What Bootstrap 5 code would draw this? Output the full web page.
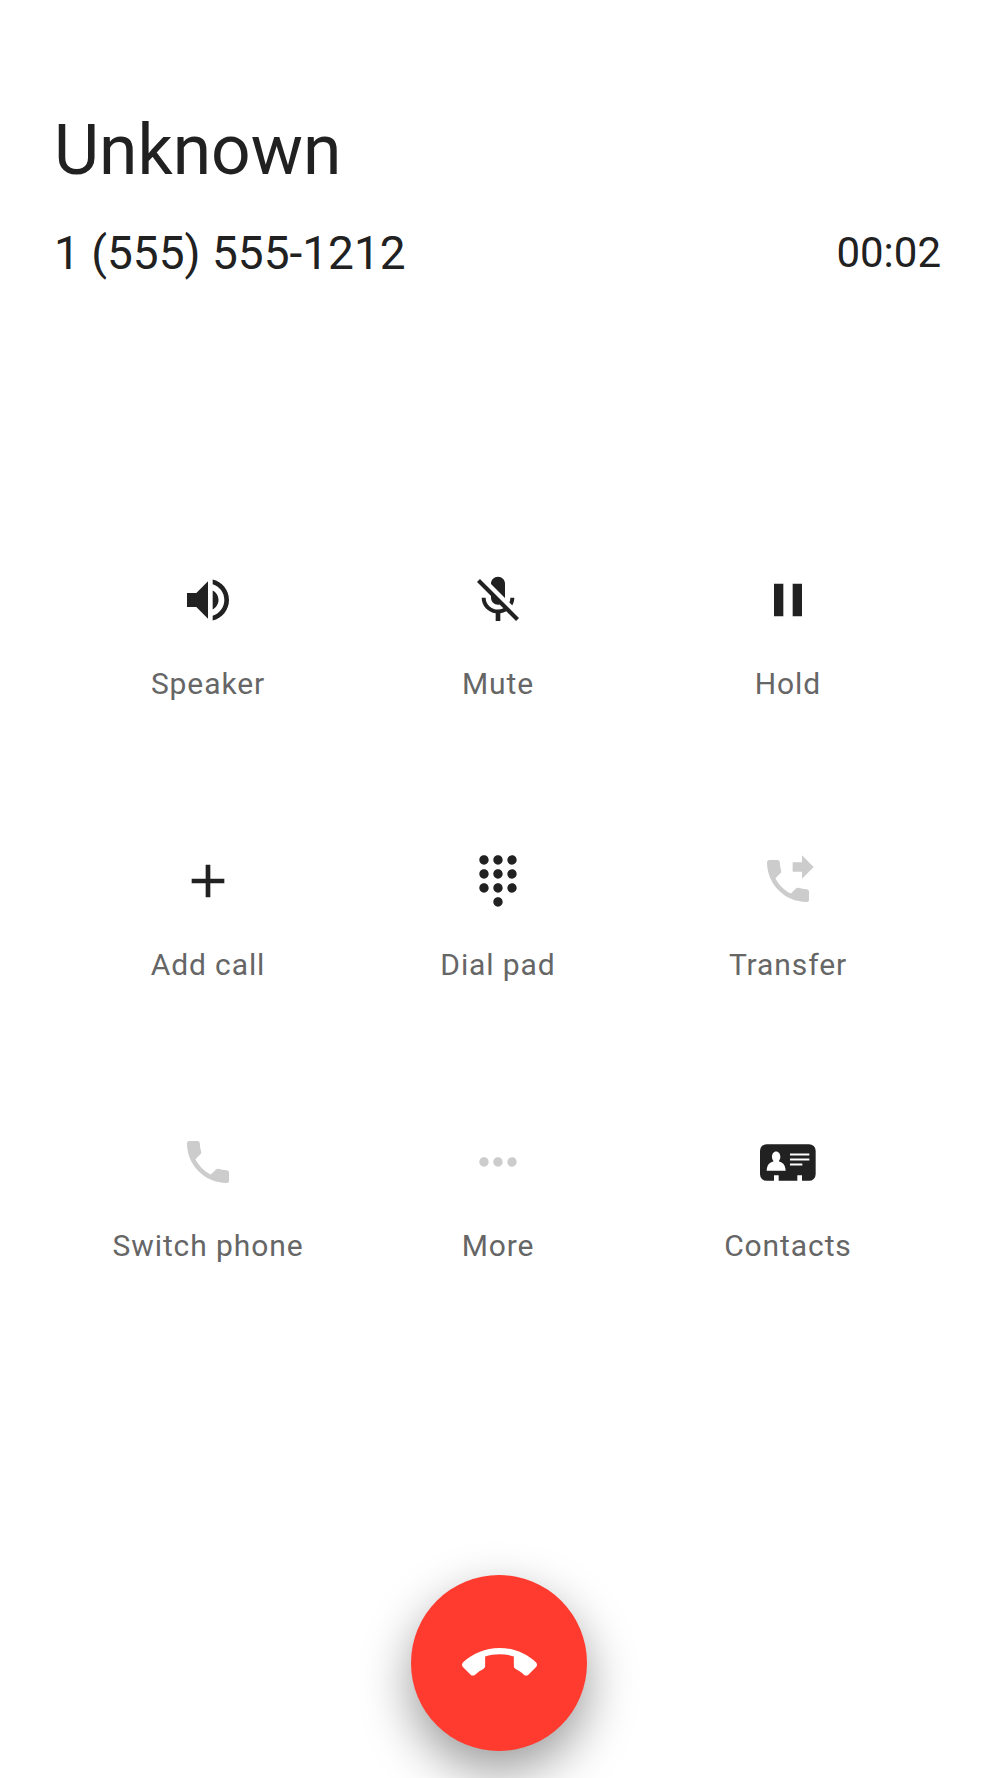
<!DOCTYPE html>
<html lang="en">
<head>
  <meta charset="UTF-8">
  <title>In call</title>
  <link href="https://cdn.jsdelivr.net/npm/bootstrap@5.3.0/dist/css/bootstrap.min.css" rel="stylesheet">
  <style>
    body { font-family: Roboto, "Liberation Sans", sans-serif; background: #fff; color: #212121; }
    .call-screen { height: 1778px; overflow: hidden; }
    .call-head { padding: 111px 59px 0 54px; }
    .call-name { font-size: 69.5px; line-height: 80px; font-weight: 400; margin: 0 0 32px; }
    .call-line { font-size: 46px; line-height: 60px; }
    .call-timer { font-size: 42px; }
    .call-grid { width: 870px; margin: 289px 0 0 63px; }
    .call-cell { height: 281px; }
    .call-icon { width: 56px; height: 56px; display: block; fill: #212121; }
    .call-icon.is-off { fill: #ccc; }
    .call-card { width: 56px; height: 37px; margin: 9.5px 0; display: block; }
    .call-label { margin-top: 36px; font-size: 30px; line-height: 40px; letter-spacing: .9px; color: #666; }
    .call-end { width: 176px; height: 176px; margin: 160px 0 0 411px; border: 0; padding: 0; border-radius: 50%; background: #ff3b30; box-shadow: 0 20px 50px rgba(0,0,0,.4); }
    .call-end svg { width: 75px; height: 75px; fill: #fff; }
  </style>
</head>
<body>
  <div class="call-screen">
    <div class="call-head">
      <h1 class="call-name">Unknown</h1>
      <div class="d-flex justify-content-between align-items-center call-line">
        <span>1 (555) 555-1212</span>
        <span class="call-timer">00:02</span>
      </div>
    </div>

    <div class="row g-0 call-grid">
      <div class="col-4 call-cell d-flex flex-column align-items-center">
        <svg class="call-icon" viewBox="0 0 24 24"><path d="M3 9v6h4l5 5V4L7 9H3zm13.5 3c0-1.77-1.02-3.29-2.5-4.03v8.05c1.48-.73 2.5-2.25 2.5-4.02zM14 3.23v2.06c2.89.86 5 3.54 5 6.71s-2.11 5.85-5 6.71v2.06c4.01-.91 7-4.49 7-8.77s-2.99-7.86-7-8.77z"/></svg>
        <div class="call-label">Speaker</div>
      </div>
      <div class="col-4 call-cell d-flex flex-column align-items-center">
        <svg class="call-icon" viewBox="0 0 24 24"><path d="M19 11h-1.7c0 .74-.16 1.43-.43 2.05l1.23 1.23c.56-.98.9-2.09.9-3.28zm-4.02.17c0-.06.02-.11.02-.17V5c0-1.66-1.34-3-3-3S9 3.34 9 5v.18l5.98 5.99zM4.27 3L3 4.27l6.01 6.01V11c0 1.66 1.33 3 2.99 3 .22 0 .44-.03.65-.08l1.66 1.66c-.71.33-1.5.52-2.31.52-2.76 0-5.3-2.1-5.3-5.1H5c0 3.41 2.72 6.23 6 6.72V21h2v-3.28c.91-.13 1.77-.45 2.54-.9L19.73 21 21 19.73 4.27 3z"/></svg>
        <div class="call-label">Mute</div>
      </div>
      <div class="col-4 call-cell d-flex flex-column align-items-center">
        <svg class="call-icon" viewBox="0 0 24 24"><path d="M6 19h4V5H6v14zm8-14v14h4V5h-4z"/></svg>
        <div class="call-label">Hold</div>
      </div>

      <div class="col-4 call-cell d-flex flex-column align-items-center">
        <svg class="call-icon" viewBox="0 0 24 24"><path d="M19 13h-6v6h-2v-6H5v-2h6V5h2v6h6v2z"/></svg>
        <div class="call-label">Add call</div>
      </div>
      <div class="col-4 call-cell d-flex flex-column align-items-center">
        <svg class="call-icon" viewBox="0 0 24 24"><path d="M12 19c-1.1 0-2 .9-2 2s.9 2 2 2 2-.9 2-2-.9-2-2-2zM6 1c-1.1 0-2 .9-2 2s.9 2 2 2 2-.9 2-2-.9-2-2-2zm0 6c-1.1 0-2 .9-2 2s.9 2 2 2 2-.9 2-2-.9-2-2-2zm0 6c-1.1 0-2 .9-2 2s.9 2 2 2 2-.9 2-2-.9-2-2-2zm12-8c1.1 0 2-.9 2-2s-.9-2-2-2-2 .9-2 2 .9 2 2 2zm-6 8c-1.1 0-2 .9-2 2s.9 2 2 2 2-.9 2-2-.9-2-2-2zm6 0c-1.1 0-2 .9-2 2s.9 2 2 2 2-.9 2-2-.9-2-2-2zm0-6c-1.1 0-2 .9-2 2s.9 2 2 2 2-.9 2-2-.9-2-2-2zm-6 0c-1.1 0-2 .9-2 2s.9 2 2 2 2-.9 2-2-.9-2-2-2zm0-6c-1.1 0-2 .9-2 2s.9 2 2 2 2-.9 2-2-.9-2-2-2z"/></svg>
        <div class="call-label">Dial pad</div>
      </div>
      <div class="col-4 call-cell d-flex flex-column align-items-center">
        <svg class="call-icon is-off" viewBox="0 0 24 24"><path d="M18 11l5-5-5-5v3h-4v4h4v3zm2 4.5c-1.25 0-2.45-.2-3.57-.57-.35-.11-.74-.03-1.02.24l-2.2 2.2c-2.83-1.44-5.15-3.75-6.59-6.59l2.2-2.21c.28-.26.36-.65.25-1C8.7 6.45 8.5 5.25 8.5 4c0-.55-.45-1-1-1H4c-.55 0-1 .45-1 1 0 9.39 7.61 17 17 17 .55 0 1-.45 1-1v-3.5c0-.55-.45-1-1-1z"/></svg>
        <div class="call-label">Transfer</div>
      </div>

      <div class="col-4 call-cell d-flex flex-column align-items-center">
        <svg class="call-icon is-off" viewBox="0 0 24 24"><path d="M6.62 10.79c1.44 2.83 3.76 5.14 6.59 6.59l2.2-2.2c.27-.27.67-.36 1.02-.24 1.12.37 2.33.57 3.57.57.55 0 1 .45 1 1V20c0 .55-.45 1-1 1-9.39 0-17-7.61-17-17 0-.55.45-1 1-1h3.5c.55 0 1 .45 1 1 0 1.25.2 2.45.57 3.57.11.35.03.74-.25 1.02l-2.2 2.2z"/></svg>
        <div class="call-label">Switch phone</div>
      </div>
      <div class="col-4 call-cell d-flex flex-column align-items-center">
        <svg class="call-icon is-off" viewBox="0 0 24 24"><path d="M6 10c-1.1 0-2 .9-2 2s.9 2 2 2 2-.9 2-2-.9-2-2-2zm12 0c-1.1 0-2 .9-2 2s.9 2 2 2 2-.9 2-2-.9-2-2-2zm-6 0c-1.1 0-2 .9-2 2s.9 2 2 2 2-.9 2-2-.9-2-2-2z"/></svg>
        <div class="call-label">More</div>
      </div>
      <div class="col-4 call-cell d-flex flex-column align-items-center">
        <svg class="call-card" viewBox="30 72 168 110">
          <path fill="#212121" d="M50 72h127a20 20 0 0 1 20 20v70a20 20 0 0 1-20 20h-21v-17h-14v17H86v-17H72v17H50a20 20 0 0 1-20-20V92a20 20 0 0 1 20-20z"/>
          <path fill="#fff" d="M78 94c8 0 13 7 13 16 0 6-2 10-5 13 10 3 20 8 21 29H50c1-21 11-26 21-29-3-3-5-7-5-13 0-9 5-16 12-16z"/>
          <path fill="#fff" d="M120 100h58v6h-58zm0 15h58v6h-58zm0 15h37v6h-37z"/>
        </svg>
        <div class="call-label">Contacts</div>
      </div>
    </div>

    <button class="call-end d-flex align-items-center justify-content-center" type="button" aria-label="End call">
      <svg viewBox="0 0 24 24"><path d="M12 9c-1.6 0-3.15.25-4.6.72v3.1c0 .39-.23.74-.56.9-.98.49-1.87 1.12-2.66 1.85-.18.18-.43.28-.7.28-.28 0-.53-.11-.71-.29L.29 13.08c-.18-.17-.29-.42-.29-.7 0-.28.11-.53.29-.71C3.34 8.78 7.46 7 12 7s8.66 1.78 11.71 4.67c.18.18.29.43.29.71 0 .28-.11.53-.29.71l-2.48 2.48c-.18.18-.43.29-.71.29-.27 0-.52-.11-.7-.28-.79-.74-1.69-1.36-2.67-1.85-.33-.16-.56-.5-.56-.9v-3.1C15.15 9.25 13.6 9 12 9z"/></svg>
    </button>
  </div>
  <script src="https://cdn.jsdelivr.net/npm/bootstrap@5.3.0/dist/js/bootstrap.bundle.min.js"></script>
</body>
</html>
